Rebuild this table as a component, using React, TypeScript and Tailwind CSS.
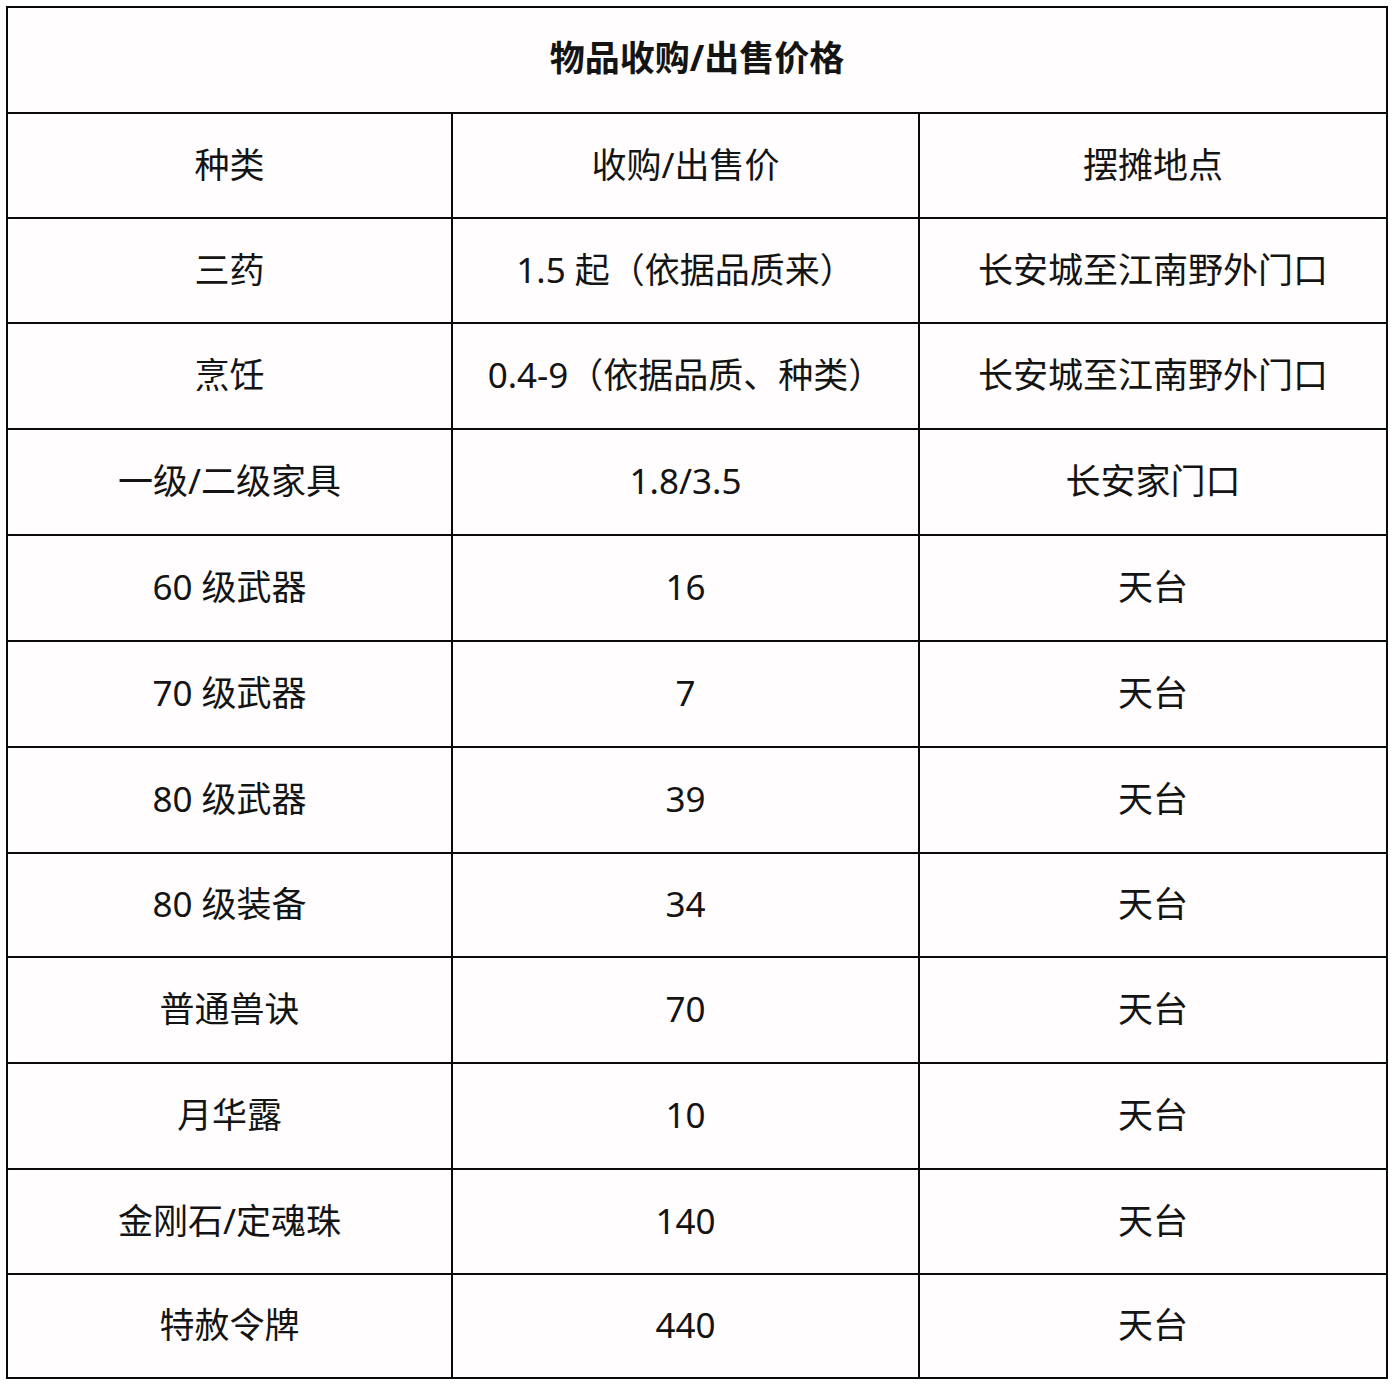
import React from "react";

// ── Data ──────────────────────────────────────────────────────────────────────

const ROWS: { kind: string; price: string; place: string; h: number }[] = [
  { kind: "种类", price: "收购/出售价", place: "摆摊地点", h: 105 },
  { kind: "三药", price: "1.5 起（依据品质来）", place: "长安城至江南野外门口", h: 105 },
  { kind: "烹饪", price: "0.4-9（依据品质、种类）", place: "长安城至江南野外门口", h: 106 },
  { kind: "一级/二级家具", price: "1.8/3.5", place: "长安家门口", h: 106 },
  { kind: "60 级武器", price: "16", place: "天台", h: 106 },
  { kind: "70 级武器", price: "7", place: "天台", h: 106 },
  { kind: "80 级武器", price: "39", place: "天台", h: 106 },
  { kind: "80 级装备", price: "34", place: "天台", h: 104 },
  { kind: "普通兽诀", price: "70", place: "天台", h: 106 },
  { kind: "月华露", price: "10", place: "天台", h: 106 },
  { kind: "金刚石/定魂珠", price: "140", place: "天台", h: 105 },
  { kind: "特赦令牌", price: "440", place: "天台", h: 102 },
];

const FONT = { fontFamily: '"Noto Sans", "Noto Sans CJK SC", sans-serif' };

// ── Component ─────────────────────────────────────────────────────────────────

export default function App() {
  return (
    <div className="min-h-[1388px] w-[1396px] bg-white pt-[6px] pl-[6px]" style={FONT}>
      <div className="w-[1382px] border-2 border-[#0a0a0a] bg-[#fffdfe] text-[#141414]">
        {/* Title */}
        <div className="flex h-[106px] items-center justify-center border-b-2 border-[#0a0a0a] pb-[3px] text-[35px] font-bold">
          物品收购/出售价格
        </div>

        {ROWS.map((r, i) => (
          <div
            key={r.kind}
            className={`flex text-[35px] leading-none ${
              i < ROWS.length - 1 ? "border-b-2 border-[#0a0a0a]" : ""
            }`}
            style={{ height: r.h }}
          >
            <div className="flex w-[445px] shrink-0 items-center justify-center border-r-2 border-[#0a0a0a] pb-[3px]">
              {r.kind}
            </div>
            <div className="flex w-[467px] shrink-0 items-center justify-center border-r-2 border-[#0a0a0a] pb-[3px]">
              {r.price}
            </div>
            <div className="flex flex-1 items-center justify-center pb-[3px]">{r.place}</div>
          </div>
        ))}
      </div>
    </div>
  );
}
